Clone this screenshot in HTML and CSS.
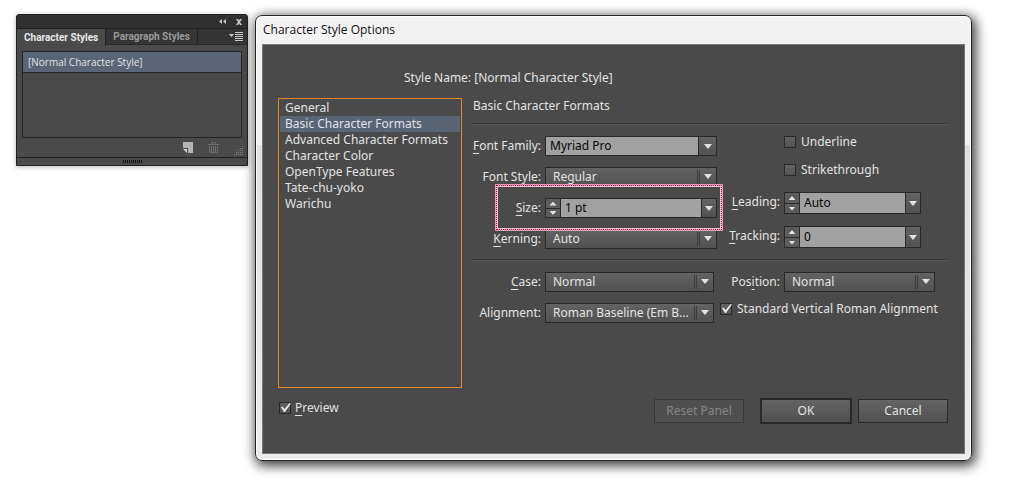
FILE: index.html
```html
<!DOCTYPE html>
<html lang="en">
<head>
<meta charset="utf-8">
<title>Character Style Options</title>
<link rel="stylesheet" href="styles.css">
</head>
<body>
<main class="workspace">
  <section class="panel" aria-label="Character Styles">
    <div class="panel-bar">
      <button class="icon-btn" aria-label="Collapse"><svg width="8" height="5" viewBox="0 0 8 5"><path d="M3 0v5L0 2.5zM7 0v5L4 2.5z" fill="#c4c4c4"/></svg></button>
      <button class="icon-btn" aria-label="Close"><svg width="6" height="6" viewBox="0 0 6 6"><path d="M0 0h2l1 1.500L4 0h2L4 3l2 3H4L3 4.500 2 6H0l2-3z" fill="#c4c4c4"/></svg></button>
    </div>
    <div class="tabs">
      <button class="tab tab-active">Character Styles</button>
      <button class="tab">Paragraph Styles</button>
      <button class="icon-btn tabs-menu" aria-label="Panel menu"><svg width="14" height="9" viewBox="0 0 14 9"><path d="M0 2h5L2.500 5zM6 0h8v1H6zM6 2h8v1H6zM6 4h8v1H6zM6 6h8v1H6zM6 8h8v1H6z" fill="#c8c8c8"/></svg></button>
    </div>
    <ul class="style-list">
      <li class="style-item">[Normal Character Style]</li>
    </ul>
    <div class="panel-tools">
      <button class="icon-btn" aria-label="New style"><svg width="10" height="11" viewBox="0 0 10 11"><path d="M0 0h10v11H5V6H0z" fill="#b4b4b4"/><path d="M0 7h4v4z" fill="#d4d4d4"/></svg></button>
      <button class="icon-btn" aria-label="Delete style"><svg width="11" height="11" viewBox="0 0 11 11" fill="none" stroke="#6c6c6c"><path d="M0 2.500h11M3.500 2V.5h4V2M1.500 4v6.500h8V4M3.500 4v6M5.500 4v6M7.500 4v6"/></svg></button>
      <svg class="grip" width="10" height="10" viewBox="0 0 10 10"><path d="M8 0h1v1H8zM6 2h1v1H6zM8 2h1v1H8zM4 4h1v1H4zM6 4h1v1H6zM8 4h1v1H8zM2 6h1v1H2zM4 6h1v1H4zM6 6h1v1H6zM8 6h1v1H8zM0 8h1v1H0zM2 8h1v1H2zM4 8h1v1H4zM6 8h1v1H6zM8 8h1v1H8z" fill="#858585"/></svg>
    </div>
    <div class="panel-foot"><span class="handle"></span></div>
  </section>

  <section class="dialog" role="dialog" aria-labelledby="title">
    <h1 class="title" id="title">Character Style Options</h1>
    <form class="content">
      <p class="style-name">Style Name: [Normal Character Style]</p>
      <div class="columns">
        <ul class="categories">
          <li>General</li>
          <li class="selected">Basic Character Formats</li>
          <li>Advanced Character Formats</li>
          <li>Character Color</li>
          <li>OpenType Features</li>
          <li>Tate-chu-yoko</li>
          <li>Warichu</li>
        </ul>
        <div class="formats">
          <h2 class="heading">Basic Character Formats</h2>
          <div class="group">
            <div class="stack">
              <div class="row"><label for="family"><u>F</u>ont Family:</label><div class="combo"><input id="family" value="Myriad Pro"><button type="button" class="drop drop-wide" aria-label="Font families"></button></div></div>
              <div class="row"><label for="fstyle">Font Style:</label><div class="select"><select id="fstyle"><option>Regular</option></select></div></div>
              <div class="row marked"><label for="size"><u>S</u>ize:</label><div class="combo"><span class="stepper"><button type="button" aria-label="Increase size"></button><button type="button" aria-label="Decrease size"></button></span><input id="size" value="1 pt"><button type="button" class="drop" aria-label="Sizes"></button></div></div>
              <div class="row"><label for="kern"><u>K</u>erning:</label><div class="select"><select id="kern"><option>Auto</option></select></div></div>
            </div>
            <div class="stack side">
              <label class="check indent"><input type="checkbox">Underline</label>
              <label class="check indent"><input type="checkbox">Strikethrough</label>
              <div class="row tall"><label for="lead"><u>L</u>eading:</label><div class="combo"><span class="stepper"><button type="button" aria-label="Increase leading"></button><button type="button" aria-label="Decrease leading"></button></span><input id="lead" value="Auto"><button type="button" class="drop" aria-label="Leadings"></button></div></div>
              <div class="row tall last"><label for="track"><u>T</u>racking:</label><div class="combo"><span class="stepper"><button type="button" aria-label="Increase tracking"></button><button type="button" aria-label="Decrease tracking"></button></span><input id="track" value="0"><button type="button" class="drop" aria-label="Trackings"></button></div></div>
            </div>
          </div>
          <div class="group">
            <div class="stack narrow">
              <div class="row"><label for="case"><u>C</u>ase:</label><div class="select"><select id="case"><option>Normal</option></select></div></div>
              <div class="row"><label for="align">Alignment:</label><div class="select"><select id="align"><option>Roman Baseline (Em B...</option></select></div></div>
            </div>
            <div class="stack">
              <div class="row wide"><label for="pos">Pos<u>i</u>tion:</label><div class="select"><select id="pos"><option>Normal</option></select></div></div>
              <label class="check"><input type="checkbox" checked>Standard Vertical Roman Alignment</label>
            </div>
          </div>
        </div>
      </div>
      <div class="footer">
        <label class="check preview"><input type="checkbox" checked><span><u>P</u>review</span></label>
        <button type="button" class="btn reset" disabled>Reset Panel</button>
        <button type="button" class="btn ok">OK</button>
        <button type="button" class="btn">Cancel</button>
      </div>
    </form>
  </section>
</main>
</body>
</html>
```
FILE: styles.css
```css
* { box-sizing: border-box; }
body { margin: 0; background: #fff; font: 12px/16px "Noto Sans", sans-serif; color: #e2e2e2; }
button, input, select { font: inherit; color: inherit; margin: 0; padding: 0; border: 0; border-radius: 0; background: none; min-width: 0; }
h1, h2, p, ul { margin: 0; padding: 0; font: inherit; list-style: none; }
u { text-underline-offset: 3px; text-decoration-thickness: 1px; }
svg { display: block; }

.workspace { display: flex; align-items: flex-start; gap: 7px; padding: 14px 47px 36px 16px; }

/* Styles panel */
.panel { width: 232px; flex: none; font-size: 10px; background: #4a4a4a; border: 1px solid #222; border-radius: 3px 3px 0 0; box-shadow: 0 1px 5px rgba(0,0,0,.3); }
.panel-bar { display: flex; justify-content: flex-end; align-items: center; gap: 9px; height: 13px; padding: 0 5px; background: #303030; }
.tabs { display: flex; height: 17px; background: #353535; border-top: 1px solid #222; border-bottom: 1px solid #282828; }
.tab { padding: 0 7px; font-family: Roboto, sans-serif; font-weight: 700; line-height: 15px; color: #999; border-right: 1px solid #222; }
.tab-active { color: #e8e8e8; background: #4a4a4a; height: 17px; }
.tabs-menu { margin: 0 4px 0 auto; }
.style-list { height: 87px; margin: 6px 5px 0; border: 1px solid #252525; }
.style-item { height: 21px; padding-left: 5px; font-family: "Open Sans", sans-serif; line-height: 20px; background: #5a6577; border-bottom: 1px solid #252525; }
.panel-tools { display: flex; justify-content: flex-end; align-items: center; gap: 15px; height: 19px; padding-right: 3px; }
.grip { align-self: flex-end; margin-bottom: 1px; }
.panel-foot { display: flex; justify-content: center; align-items: center; height: 8px; border-top: 1px solid #222; }
.handle { width: 19px; height: 3px; background: repeating-linear-gradient(90deg, #111 0 1px, transparent 1px 2px); }

/* Dialog frame */
.dialog { flex: 1; margin-top: 1px; padding: 0 6px 6px; border: 1px solid #262626; border-radius: 7px; background: linear-gradient(#f2f2f2 0 129px, #e0e0e0 129px, #ebebeb); box-shadow: inset 0 0 0 1px #fff, 2px 3px 12px 2px rgba(0,0,0,.75); }
.title { height: 28px; padding-left: 1px; font: 12px/28px "Open Sans", sans-serif; color: #111; }
.content { padding: 25px 15px 29px; background: #4a4a4a; border: 1px solid #777; }
.style-name { padding-left: 126px; margin-bottom: 12px; }
.columns { display: grid; grid-template-columns: 184px 1fr; gap: 10px; }
.categories { height: 290px; padding: 1px; border: 1px solid #e0892a; }
.categories li { padding-left: 5px; }
.categories .selected { background: #596475; }

/* Format fields */
.heading { height: 25px; padding-left: 1px; }
.group { display: grid; grid-template-columns: 245px 1fr; gap: 3px; padding: 11px 0; border-top: 1px solid #363636; box-shadow: inset 0 1px #575757; }
.group + .group { padding-top: 12px; }
.stack { display: flex; flex-direction: column; gap: 12px; }
.heading + .group { padding-top: 12px; }
.side { gap: 16px; }
.narrow { padding-right: 3px; }
.row { position: relative; display: grid; grid-template-columns: 69px 1fr; gap: 4px; height: 19px; }
.row label { text-align: right; line-height: 20px; white-space: nowrap; }
.stack + .stack .row { grid-template-columns: 60px 137px; }
.stack + .stack .wide { grid-template-columns: 60px 151px; }
.stack .tall { height: 22px; }
.side .last { margin-top: -4px; }

.select { position: relative; border: 1px solid #292929; background: linear-gradient(#636363, #515151); }
.select select { display: block; width: 100%; height: 17px; padding: 0 18px 0 7px; line-height: 16px; appearance: none; outline: 0; }
.select option { color: #111; }
.select::before { content: ""; position: absolute; right: 16px; top: 2px; bottom: 2px; width: 3px; box-sizing: border-box; border: solid #3c3c3c; border-width: 0 1px; pointer-events: none; }
.select::after { content: ""; position: absolute; right: 4px; top: 6px; border: 4px solid transparent; border-top: 5px solid #e2e2e2; border-bottom: 0; pointer-events: none; }

.combo { display: flex; border: 1px solid #292929; background: #a1a1a1; }
.combo input { flex: 1; width: 0; padding-left: 4px; color: #080808; outline: 0; }
.drop { display: grid; place-content: center; width: 15px; border-left: 1px solid #292929; background: linear-gradient(#636363, #515151); }
.drop-wide { width: 18px; }
.drop::before { content: ""; display: block; border: 4px solid transparent; border-top: 5px solid #e2e2e2; border-bottom: 0; }
.stepper { display: grid; grid-template-rows: 1fr 1fr; width: 15px; border-right: 1px solid #292929; }
.stepper button { display: grid; place-content: center; min-height: 0; background: #5c5c5c; }
.stepper button + button { border-top: 1px solid #292929; }
.stepper button::before { content: ""; width: 7px; height: 4px; background: #e2e2e2; clip-path: polygon(0 0, 100% 0, 50% 100%); }
.stepper button:first-child::before { clip-path: polygon(50% 0, 100% 100%, 0 100%); }

/* Callout round the size field */
.marked::before, .marked::after { content: ""; position: absolute; pointer-events: none; z-index: 2; }
.marked::before { inset: -14px -6px -14px 23px; border: 3px solid #f0bed1; }
.marked::after { inset: -13px -5px -13px 24px; border: 1px dotted #b8003f; outline: 1px dotted #d87a9d; }

.check { display: flex; align-items: center; gap: 5px; height: 12px; white-space: nowrap; }
.indent { padding-left: 64px; }
.check input { flex: none; display: grid; width: 12px; height: 12px; appearance: none; border: 1px solid #292929; background: linear-gradient(#626262, #525252); }
.check input:checked::before { content: ""; width: 11px; height: 9px; background: #e8e8e8; clip-path: polygon(8% 45%, 22% 38%, 42% 66%, 88% 0, 100% 5%, 45% 100%, 36% 100%); }

/* Footer */
.footer { display: flex; align-items: center; gap: 6px; margin-top: 10px; padding-right: 1px; }
.preview { margin: 0 auto 6px 1px; gap: 4px; }
.btn { width: 90px; height: 24px; line-height: 20px; text-align: center; border: 1px solid #292929; background: linear-gradient(#646464, #505050); }
.ok { width: 92px; height: 26px; border-width: 2px; }
.reset { margin-right: 10px; color: #858585; background: #4f4f4f; border-color: #383838; }
```
